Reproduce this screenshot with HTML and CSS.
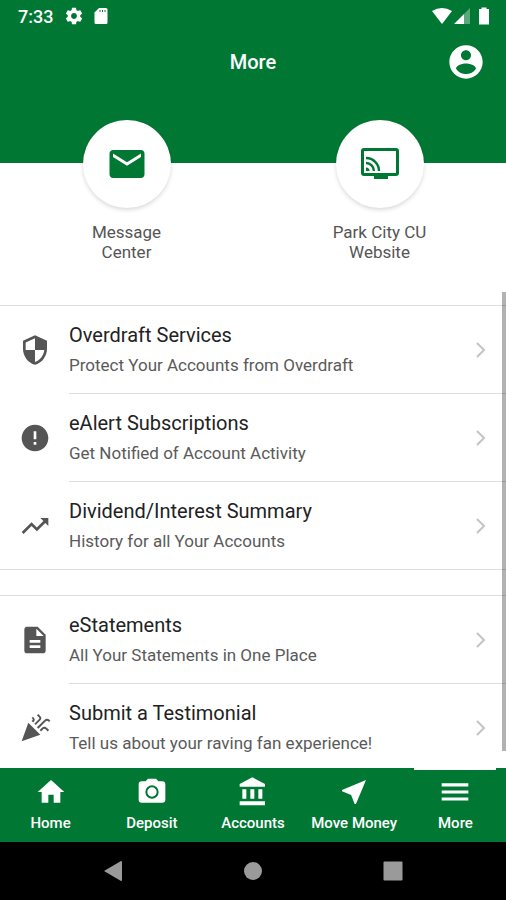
FILE: index.html
```html
<!DOCTYPE html>
<html lang="en">
<head>
    <meta charset="UTF-8">
    <meta name="viewport" content="width=device-width, initial-scale=1.0">
    <title>More</title>
    <link rel="stylesheet" href="styles.css">
</head>
<body>

<div class="app">
    <!-- Status bar -->
    <div class="status">
        <span class="time">7:33</span>
        <svg class="status-icon" viewBox="0 0 24 24"><path d="M19.43 12.98c.04-.32.07-.64.07-.98s-.03-.66-.07-.98l2.11-1.65c.19-.15.24-.42.12-.64l-2-3.46c-.12-.22-.39-.3-.61-.22l-2.49 1c-.52-.4-1.08-.73-1.69-.98l-.38-2.65C14.46 2.18 14.25 2 14 2h-4c-.25 0-.46.18-.49.42l-.38 2.65c-.61.25-1.17.59-1.69.98l-2.49-1c-.23-.09-.49 0-.61.22l-2 3.46c-.13.22-.07.49.12.64l2.11 1.65c-.04.32-.07.65-.07.98s.03.66.07.98l-2.11 1.65c-.19.15-.24.42-.12.64l2 3.46c.12.22.39.3.61.22l2.49-1c.52.4 1.08.73 1.69.98l.38 2.65c.03.24.24.42.49.42h4c.25 0 .46-.18.49-.42l.38-2.65c.61-.25 1.17-.59 1.69-.98l2.49 1c.23.09.49 0 .61-.22l2-3.46c.12-.22.07-.49-.12-.64l-2.11-1.65zM12 15.5c-1.93 0-3.5-1.57-3.5-3.5s1.57-3.5 3.5-3.5 3.5 1.57 3.5 3.5-1.57 3.5-3.5 3.5z"/></svg>
        <svg class="status-icon" viewBox="0 0 20 20"><path d="M8 2h7a1.5 1.5 0 0 1 1.5 1.5v13A1.5 1.5 0 0 1 15 18H5a1.5 1.5 0 0 1-1.5-1.5V6.5z"/><path class="notch" d="M8.500 4h1v2h-1zM11 4h1v2h-1zM13.5 4h1v2h-1z"/></svg>
        <div class="status-right">
            <svg class="status-icon" viewBox="0 0 20 20"><path d="M10 18L0 5Q10-1 20 5z"/></svg>
            <svg class="status-icon" viewBox="0 0 20 20"><path class="faint" d="M17 2v16h-6V8z"/><path d="M1 18L11 8v10z"/></svg>
            <svg class="status-icon" viewBox="0 0 20 20"><path d="M7.5 1.5h5V3H15v15.5H5V3h2.5z"/></svg>
        </div>
    </div>

    <header class="topbar">
        <h1>More</h1>
        <button class="profile" type="button" aria-label="Profile">
            <svg viewBox="0 0 24 24"><path d="M12 2C6.48 2 2 6.48 2 12s4.48 10 10 10 10-4.48 10-10S17.52 2 12 2zm0 3c1.66 0 3 1.34 3 3s-1.34 3-3 3-3-1.34-3-3 1.34-3 3-3zm0 14.2c-2.5 0-4.71-1.28-6-3.22.03-1.99 4-3.08 6-3.08 1.99 0 5.97 1.09 6 3.08-1.29 1.94-3.5 3.22-6 3.22z"/></svg>
        </button>
    </header>

    <main class="content">
        <nav class="shortcuts">
            <a class="shortcut" href="#">
                <span class="circle">
                    <svg viewBox="0 0 24 24"><path d="M20 4H4c-1.1 0-2 .9-2 2v12c0 1.1.9 2 2 2h16c1.1 0 2-.9 2-2V6c0-1.1-.9-2-2-2zm0 4l-8 5-8-5V6l8 5 8-5v2z"/></svg>
                </span>
                <span class="caption">Message<br>Center</span>
            </a>
            <a class="shortcut" href="#">
                <span class="circle">
                    <svg viewBox="0 0 42 42"><path fill-rule="evenodd" d="M5 5h32a3 3 0 0 1 3 3v22a3 3 0 0 1-3 3h-8v3H15v-3H5a3 3 0 0 1-3-3V8a3 3 0 0 1 3-3zm0 3v22h32V8z"/><path class="wave" d="M7 15A13 13 0 0 1 20 28M7 20A8 8 0 0 1 15 28"/><path d="M7 24.500a3.500 3.500 0 0 1 3.500 3.500H7z"/></svg>
                </span>
                <span class="caption">Park City CU<br>Website</span>
            </a>
        </nav>

        <ul class="group">
            <li>
                <a class="row" href="#">
                    <svg class="row-icon" viewBox="0 0 24 24"><path d="M12 1L3 5v6c0 5.55 3.84 10.74 9 12 5.16-1.26 9-6.45 9-12V5l-9-4zm0 10.99h7c-.53 4.12-3.28 7.79-7 8.94V12H5V6.3l7-3.11v8.8z"/></svg>
                    <span class="text">
                        <span class="title">Overdraft Services</span>
                        <span class="sub">Protect Your Accounts from Overdraft</span>
                    </span>
                    <svg class="chevron" viewBox="0 0 12 18"><path d="M2 2l7 7-7 7"/></svg>
                </a>
            </li>
            <li>
                <a class="row" href="#">
                    <svg class="row-icon" viewBox="0 0 24 24"><path d="M12 2C6.48 2 2 6.48 2 12s4.48 10 10 10 10-4.48 10-10S17.52 2 12 2zm1 15h-2v-2h2v2zm0-4h-2V7h2v6z"/></svg>
                    <span class="text">
                        <span class="title">eAlert Subscriptions</span>
                        <span class="sub">Get Notified of Account Activity</span>
                    </span>
                    <svg class="chevron" viewBox="0 0 12 18"><path d="M2 2l7 7-7 7"/></svg>
                </a>
            </li>
            <li>
                <a class="row" href="#">
                    <svg class="row-icon" viewBox="0 0 24 24"><path d="M16 6l2.29 2.29-4.88 4.88-4-4L2 16.59 3.41 18l6-6 4 4 6.3-6.29L22 12V6z"/></svg>
                    <span class="text">
                        <span class="title">Dividend/Interest Summary</span>
                        <span class="sub">History for all Your Accounts</span>
                    </span>
                    <svg class="chevron" viewBox="0 0 12 18"><path d="M2 2l7 7-7 7"/></svg>
                </a>
            </li>
        </ul>

        <ul class="group">
            <li>
                <a class="row" href="#">
                    <svg class="row-icon" viewBox="0 0 24 24"><path d="M14 2H6c-1.1 0-1.99.9-1.99 2L4 20c0 1.1.89 2 1.99 2H18c1.1 0 2-.9 2-2V8l-6-6zm2 16H8v-2h8v2zm0-4H8v-2h8v2zm-3-5V3.5L18.5 9H13z"/></svg>
                    <span class="text">
                        <span class="title">eStatements</span>
                        <span class="sub">All Your Statements in One Place</span>
                    </span>
                    <svg class="chevron" viewBox="0 0 12 18"><path d="M2 2l7 7-7 7"/></svg>
                </a>
            </li>
            <li>
                <a class="row" href="#">
                    <svg class="row-icon" viewBox="0 0 24 24"><path d="M14.53 1.45L13.45 2.53L15.05 4.08C15.4 4.5 15.4 4.89 15.05 5.25L11.5 8.8L12.5 9.84L16.08 6.28C17 5.28 17 4.28 16.08 3.28L14.53 1.45M10.55 3.47L9.47 4.55L10.08 5.11C10.43 5.46 10.43 5.81 10.08 6.17L9.47 6.77L10.55 7.86L11.11 7.25C12.05 6.25 12.05 5.22 11.11 4.22L10.55 3.47M21 5.06C20.31 5.06 19.67 5.33 19.08 5.91L13.45 11.5L14.53 12.5L20.11 6.94C20.7 6.35 21.3 6.35 21.89 6.94L22.5 7.55L23.53 6.47L22.97 5.91C22.38 5.33 21.72 5.06 21 5.06M7 8L2 22L16 17L7 8M19 11.06C18.28 11.06 17.64 11.33 17.06 11.91L15.47 13.5L16.55 14.58L18.14 13C18.73 12.38 19.33 12.38 19.92 13L21.5 14.58L22.59 13.5L21 11.91C20.38 11.33 19.7 11.06 19 11.06Z"/></svg>
                    <span class="text">
                        <span class="title">Submit a Testimonial</span>
                        <span class="sub">Tell us about your raving fan experience!</span>
                    </span>
                    <svg class="chevron" viewBox="0 0 12 18"><path d="M2 2l7 7-7 7"/></svg>
                </a>
            </li>
        </ul>
        <div class="scrollbar"></div>
    </main>

    <nav class="tabs">
        <a class="tab" href="#">
            <svg viewBox="0 0 24 24"><path d="M10 20v-6h4v6h5v-8h3L12 3 2 12h3v8z"/></svg>
            Home
        </a>
        <a class="tab" href="#">
            <svg viewBox="0 0 24 24"><path fill-rule="evenodd" d="M9 2L7.17 4H4c-1.1 0-2 .9-2 2v12c0 1.1.9 2 2 2h16c1.1 0 2-.9 2-2V6c0-1.1-.9-2-2-2h-3.170L15 2zM12 7a5 5 0 1 0 0 10 5 5 0 1 0 0-10zm0 1.500a3.500 3.500 0 1 1 0 7 3.500 3.500 0 1 1 0-7z"/></svg>
            Deposit
        </a>
        <a class="tab" href="#">
            <svg viewBox="0 0 24 24"><path d="M4 10v7h3v-7H4zm6 0v7h3v-7h-3zM2 22h19v-3H2v3zm14-12v7h3v-7h-3zm-4.500-9L2 6v2h19V6l-9.500-5z"/></svg>
            Accounts
        </a>
        <a class="tab" href="#">
            <svg viewBox="0 0 24 24"><path d="M21 3L3 10.53v.98l6.84 2.65L12.48 21h.98L21 3z"/></svg>
            Move Money
        </a>
        <a class="tab active" href="#">
            <svg viewBox="0 0 24 24"><path d="M2 5.500h20v2.300H2zM2 10.800h20v2.300H2zM2 16.100h20v2.300H2z"/></svg>
            More
        </a>
    </nav>

    <!-- System navigation -->
    <div class="system">
        <button type="button" aria-label="Back"><svg viewBox="0 0 20 20"><path d="M1 10L18 0a1 1 0 0 1 1 1v18a1 1 0 0 1-1 1z"/></svg></button>
        <button type="button" aria-label="Home"><svg viewBox="0 0 20 20"><circle cx="10" cy="10" r="9"/></svg></button>
        <button type="button" aria-label="Recent apps"><svg viewBox="0 0 20 20"><rect x=".5" y=".5" width="19" height="19" rx="1"/></svg></button>
    </div>
</div>

</body>
</html>
```
FILE: styles.css
```css
* {
    box-sizing: border-box;
}

body {
    margin: 0;
    font-family: Roboto, sans-serif;
    background: #fff;
    color: #222;
}

a {
    color: inherit;
    text-decoration: none;
}

button {
    padding: 0;
    border: none;
    background: none;
    cursor: pointer;
}

svg {
    display: block;
    fill: currentColor;
    flex-shrink: 0;
}

.app {
    display: flex;
    flex-direction: column;
    height: 100vh;
    overflow: hidden;
}

/* Top */
.status {
    display: flex;
    align-items: center;
    gap: 7px;
    height: 32px;
    padding: 0 12px 0 18px;
    background: #007833;
    color: #fff;
}

.time {
    margin-right: 4px;
    font-size: 18px;
    font-weight: 500;
}

.status-icon {
    width: 20px;
    height: 20px;
}

.status-right {
    display: flex;
    gap: 1px;
    margin-left: auto;
}

.notch {
    fill: #007833;
}

.faint {
    opacity: 0.35;
}

.topbar {
    display: grid;
    grid-template-columns: 1fr auto 1fr;
    align-items: center;
    height: 60px;
    padding: 0 20px;
    background: #007833;
    color: #fff;
}

.topbar h1 {
    grid-column: 2;
    margin: 0;
    font-size: 20px;
    font-weight: 500;
}

.profile {
    justify-self: end;
    color: #fff;
}

.profile svg {
    width: 40px;
    height: 40px;
}

.content {
    position: relative;
    flex: 1;
    min-height: 0;
    overflow: hidden;
}

/* Shortcuts */
.shortcuts {
    display: flex;
    padding: 28px 0 43px;
    background: linear-gradient(#007833 71px, #fff 71px);
}

.shortcut {
    flex: 1;
    display: flex;
    flex-direction: column;
    align-items: center;
    gap: 14px;
}

.circle {
    display: flex;
    align-items: center;
    justify-content: center;
    width: 88px;
    height: 88px;
    border-radius: 50%;
    background: #fff;
    color: #007833;
    box-shadow: 0 2px 4px rgba(0, 0, 0, 0.15);
}

.circle svg {
    width: 42px;
    height: 42px;
}

.wave {
    fill: none;
    stroke: currentColor;
    stroke-width: 2.4;
}

.caption {
    color: #555;
    font-size: 17px;
    line-height: 20px;
    text-align: center;
}

/* Lists */
.group {
    margin: 0 0 25px;
    padding: 0;
    list-style: none;
    border-top: 1px solid #ddd;
    border-bottom: 1px solid #ddd;
}

.group li + li {
    padding-top: 1px;
    background: linear-gradient(#ddd, #ddd) 69px 0 / 100% 1px no-repeat;
}

.row {
    display: flex;
    align-items: center;
    gap: 18px;
    padding-left: 19px;
}

.row-icon {
    width: 32px;
    height: 32px;
    color: #555;
}

.text {
    flex: 1;
    padding: 14px 0 13px;
}

.title, .sub {
    display: block;
    line-height: 30px;
}

.title {
    font-size: 20px;
}

.sub {
    color: #5a5a5a;
    font-size: 17px;
}

.chevron {
    width: 12px;
    height: 18px;
    margin-right: 19px;
    fill: none;
    stroke: #c4c4c4;
    stroke-width: 2;
}

.scrollbar {
    position: absolute;
    top: 200px;
    right: 0;
    bottom: 17px;
    width: 4px;
    background: rgba(0, 0, 0, 0.3);
}

/* Bottom */
.tabs {
    display: flex;
    height: 74px;
    background: #007833;
    color: #fff;
}

.tab {
    flex: 1;
    display: flex;
    flex-direction: column;
    align-items: center;
    gap: 5px;
    padding-top: 8px;
    font-size: 15px;
    line-height: 20px;
    font-weight: 500;
    white-space: nowrap;
}

.tab svg {
    width: 32px;
    height: 32px;
}

.active {
    background: linear-gradient(#fff, #fff) center top / 82px 2px no-repeat;
}

.system {
    display: flex;
    align-items: center;
    justify-content: center;
    gap: 120px;
    height: 58px;
    background: #000;
}

.system button {
    color: #9a9a9a;
}

.system svg {
    width: 20px;
    height: 20px;
}
```
